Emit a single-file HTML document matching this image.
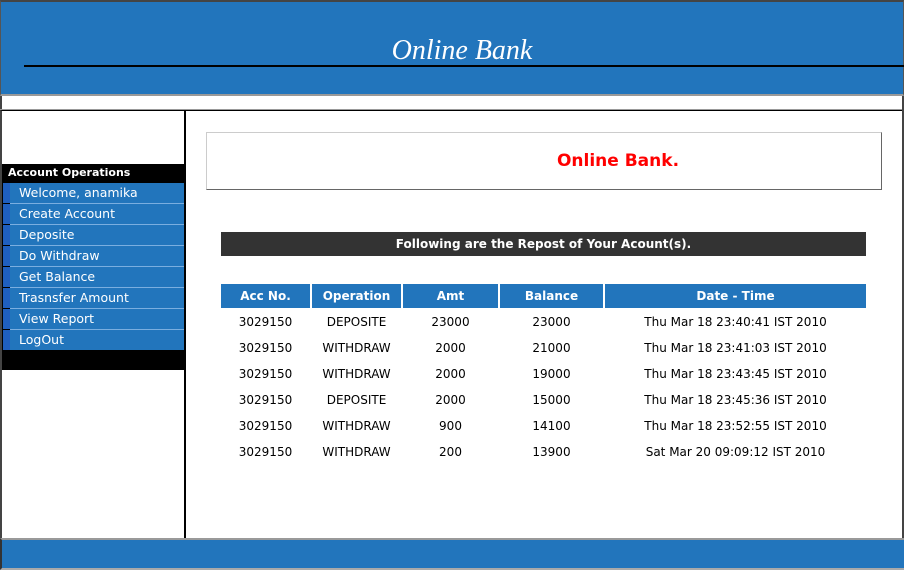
<!DOCTYPE html>
<html><head><style>
*{margin:0;padding:0;box-sizing:border-box}
body{width:904px;height:570px;background:#fff;position:relative;font-family:"DejaVu Sans",Verdana,sans-serif;font-size:12px;overflow:hidden}
.a{position:absolute}
.hdr{left:0;top:0;width:904px;height:96px;background:#2275bc;border:1px solid #555;border-top:2px solid #444;border-bottom:2px solid #999}
.ttl{left:0;width:924px;top:35px;text-align:center;color:#fff;font-family:"Liberation Serif",serif;font-style:italic;font-size:28px}
.menu div{position:absolute;left:3px;width:181px;height:20px;background:#2275bc;border-left:7px solid #1f5fbf;color:#fff;font-size:12.5px;line-height:20px;padding-left:9px}
.menu .s{position:absolute;left:10px;width:174px;height:1px;background:#7aaee0;border:0;padding:0}
th{background:#2275bc;color:#fff;font-weight:bold;height:24px;font-size:12px}
td{text-align:center;height:24px;font-size:12px}
</style></head><body>
<div class="a hdr"></div>
<div class="a" style="left:24px;top:65px;width:880px;height:2px;background:#000"></div>
<div class="a ttl">Online Bank</div>
<div class="a" style="left:0;top:96px;width:904px;height:15px;border-left:2px solid #444;border-right:2px solid #444;border-bottom:1px solid #000"></div>
<div class="a" style="left:0;top:109px;width:904px;height:1px;background:#999"></div>
<div class="a" style="left:0;top:111px;width:2px;height:428px;background:#444"></div>
<div class="a" style="left:902px;top:96px;width:2px;height:443px;background:#444"></div>
<div class="a" style="left:184px;top:111px;width:2px;height:427px;background:#000"></div>
<div class="a" style="left:0;top:538px;width:904px;height:32px;background:#2275bc;border-top:2px solid #999;border-left:2px solid #333;border-bottom:2px solid #aaa"></div>
<div class="a" style="left:2px;top:164px;width:182px;height:206px;background:#000"></div>
<div class="a" style="left:8px;top:166px;color:#fff;font-weight:bold;font-size:11px">Account Operations</div>
<div class="menu">
<div style="top:183px">Welcome, anamika</div>
<div style="top:204px">Create Account</div>
<div style="top:225px">Deposite</div>
<div style="top:246px">Do Withdraw</div>
<div style="top:267px">Get Balance</div>
<div style="top:288px">Trasnsfer Amount</div>
<div style="top:309px">View Report</div>
<div style="top:330px">LogOut</div>
<span class="s" style="top:203px"></span><span class="s" style="top:224px"></span><span class="s" style="top:245px"></span><span class="s" style="top:266px"></span><span class="s" style="top:287px"></span><span class="s" style="top:308px"></span><span class="s" style="top:329px"></span>
</div>
<div class="a" style="left:206px;top:132px;width:676px;height:58px;border:1px solid #ccc;border-right-color:#666;border-bottom-color:#666"></div>
<div class="a" style="left:206px;top:151px;width:824px;text-align:center;color:#f00;font-weight:bold;font-size:17px">Online Bank.</div>
<div class="a" style="left:221px;top:232px;width:645px;height:24px;background:#333;color:#fff;font-weight:bold;text-align:center;line-height:24px;font-size:12px">Following are the Repost of Your Acount(s).</div>
<table class="a" style="left:219px;top:282px;border-collapse:separate;border-spacing:2px">
<tr><th style="width:89px">Acc No.</th><th style="width:89px">Operation</th><th style="width:95px">Amt</th><th style="width:103px">Balance</th><th style="width:261px">Date - Time</th></tr>
<tr><td>3029150</td><td>DEPOSITE</td><td>23000</td><td>23000</td><td>Thu Mar 18 23:40:41 IST 2010</td></tr>
<tr><td>3029150</td><td>WITHDRAW</td><td>2000</td><td>21000</td><td>Thu Mar 18 23:41:03 IST 2010</td></tr>
<tr><td>3029150</td><td>WITHDRAW</td><td>2000</td><td>19000</td><td>Thu Mar 18 23:43:45 IST 2010</td></tr>
<tr><td>3029150</td><td>DEPOSITE</td><td>2000</td><td>15000</td><td>Thu Mar 18 23:45:36 IST 2010</td></tr>
<tr><td>3029150</td><td>WITHDRAW</td><td>900</td><td>14100</td><td>Thu Mar 18 23:52:55 IST 2010</td></tr>
<tr><td>3029150</td><td>WITHDRAW</td><td>200</td><td>13900</td><td>Sat Mar 20 09:09:12 IST 2010</td></tr>
</table>
</body></html>
